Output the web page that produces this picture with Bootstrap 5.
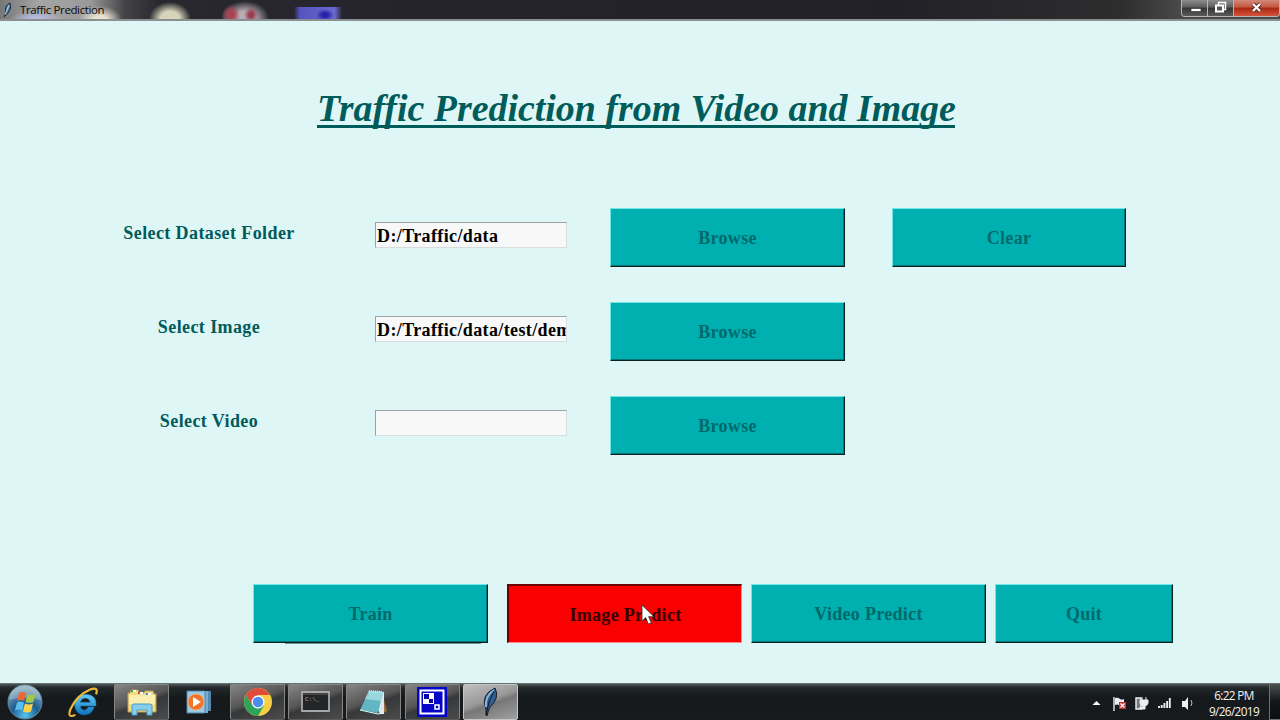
<!doctype html>
<html lang="en">
  <head>
    <meta charset="utf-8">
    <meta name="viewport" content="width=device-width, initial-scale=1">
    <title>Traffic Prediction</title>
    <link href="https://cdn.jsdelivr.net/npm/bootstrap@5.3.0/dist/css/bootstrap.min.css" rel="stylesheet">
    <style>
      body {
        background-color: #dff6f6;
        font-family: "Liberation Serif", "Times New Roman", serif;
      }
      svg {
        display: block;
      }

      /* window title bar */
      .titlebar {
        height: 21px;
        background:
          radial-gradient(ellipse 22px 14px at 100px 20px, #e8e2d2 30%, transparent 100%),
          radial-gradient(ellipse 26px 10px at 36px 20px, #b9bbe6 20%, transparent 100%),
          radial-gradient(ellipse 21px 17px at 170px 19px, #d8d4ba 45%, transparent 100%),
          radial-gradient(ellipse 9px 10px at 231px 15px, #a84452 35%, transparent 100%),
          radial-gradient(ellipse 7px 8px at 251px 15px, #983d4e 30%, transparent 100%),
          radial-gradient(ellipse 24px 17px at 245px 18px, #b8acb4 40%, transparent 100%),
          radial-gradient(ellipse 9px 6px at 325px 15px, #2422aa 30%, transparent 100%),
          linear-gradient(90deg, transparent, #5553bd 12%, #6b69cf 85%, transparent) 294px 7px / 48px 13px no-repeat,
          linear-gradient(90deg, #777 0, #a5a5a5 40px, #9a9a9a 90px, #444346 125px, #29282e 160px, #25242c 400px, #222127 900px, #2d2d2e 1120px, #494949 1180px);
        border-bottom: 2px solid #89908f;
      }
      .titlebar-text {
        font: 11.5px/19px "Open Sans", sans-serif;
        letter-spacing: -.38px;
        color: #0b0b0b;
      }
      .win-controls {
        height: 17px;
        border: 1px solid #b5b5b5;
        border-top: 0;
        border-radius: 0 0 4px 4px;
        overflow: hidden;
      }
      .win-ctl {
        width: 26px;
        background: linear-gradient(#8d8d8d, #5c5c5c 45%, #343434 50%, #5a5a5a);
        border-right: 1px solid #b5b5b5;
      }
      .win-close {
        width: 45px;
        border-right: 0;
        background: linear-gradient(#d08a7c, #c4563f 45%, #a82710 50%, #d2543a);
      }

      /* application form */
      .app {
        height: 662px;
        padding-top: 64px;
      }
      .app-title {
        font-size: 37.9px;
        line-height: 46px;
        font-weight: bold;
        font-style: italic;
        color: #005b5b;
        margin: 0 0 77px 317px;
        white-space: nowrap;
      }
      .app-title span {
        display: inline-block;
        height: 43px;
        width: 638px;
        border-bottom: 3px solid #005b5b;
      }
      .fields {
        display: grid;
        grid-template-columns: 332px 192px 235px 235px;
        grid-auto-rows: 59px;
        row-gap: 35px;
        margin-left: 43px;
      }
      .field-label {
        font-size: 18px;
        font-weight: bold;
        line-height: 22px;
        letter-spacing: .4px;
        color: #005b5b;
        text-align: center;
        padding-top: 14px;
      }
      .tk-entry {
        width: 192px;
        height: 26px;
        margin-top: 14px;
        padding: 2px 0 0 1px;
        border: 1px solid #d5dddd;
        border-top-color: #9aa3a3;
        border-left-color: #9aa3a3;
        background: #f8f8f8;
        color: #000;
        font-size: 18px;
        font-weight: bold;
        letter-spacing: .38px;
        line-height: 22px;
        outline: 0;
      }
      .tk-btn {
        width: 235px;
        height: 59px;
        padding: 1px 0 0;
        border: 1px solid;
        border-color: #74e4e4 #0b2020 #0b2020 #74e4e4;
        border-radius: 0;
        box-shadow: inset -1px -1px #087575;
        background: #00b0b0;
        color: #00696a;
        font-size: 18px;
        font-weight: bold;
        letter-spacing: .3px;
        line-height: 22px;
      }
      .browse-btn {
        margin-left: 43px;
      }
      .clear-btn {
        width: 234px;
        margin-left: 90px;
      }
      .actions {
        margin: 129px 0 0 253px;
      }
      .train-btn {
        position: relative;
      }
      .train-btn::after {
        content: "";
        position: absolute;
        left: 31px;
        right: 6px;
        bottom: -2px;
        height: 1px;
        background: #6f9696;
      }
      .active-btn {
        background: #fa0000;
        border-width: 2px 1px 1px 2px;
        border-color: #6b0000 #ff8a8a #ff8a8a #6b0000;
        box-shadow: none;
        color: #370000;
        padding: 2px 0 0 1px;
        position: relative;
      }
      .quit-btn {
        width: 178px;
      }
      .pointer {
        position: absolute;
        left: 132px;
        top: 18px;
      }

      /* taskbar */
      .taskbar {
        height: 37px;
        background: linear-gradient(#758080 0, #3f4546 2px, #22282a 5px, #15191b 40%, #181b1d);
      }
      .task-item {
        width: 55px;
        height: 36px;
        margin-top: 1px;
        display: flex;
        align-items: center;
        justify-content: center;
      }
      .task-open {
        border: 1px solid #858585;
        border-bottom-color: #5a5a5a;
        border-radius: 2px;
        background: linear-gradient(160deg, #858585, #555 45%, #373839 55%, #4b4b4c);
      }
      .task-current {
        border-color: #c5c5c5;
        background: linear-gradient(160deg, #c0c0c0, #989898 45%, #777 55%, #a0a0a0);
      }
      .tray {
        padding-top: 2px;
      }
      .clock {
        width: 62px;
        font: 11.8px/16px "Open Sans", sans-serif;
        letter-spacing: -.65px;
        color: #f4f4f4;
        text-align: center;
        padding-top: 2px;
      }
      .show-desktop {
        width: 11px;
        border: 1px solid #6c7070;
        border-right: 0;
        background: linear-gradient(#4b5050, #141718 50%, #0b0d0e);
      }
    </style>
  </head>
  <body class="vh-100 overflow-hidden">
    <header class="titlebar d-flex">
      <svg class="ms-1" width="12" height="19" viewBox="0 0 12 19">
        <path d="M0 17 L2 12 Q0 6 6 3 Q8 8 4 13 Z" fill="#4e87b6" stroke="#132536" stroke-width="1"/>
        <path d="M1 15 L5 5" stroke="#d5e9f5" stroke-width=".8"/>
      </svg>
      <span class="titlebar-text ms-1">Traffic Prediction</span>
      <div class="win-controls d-flex ms-auto">
        <div class="win-ctl"><svg width="26" height="16"><path d="M9 8.5h10v3H9z" fill="#fff" stroke="#333" stroke-width=".7"/></svg></div>
        <div class="win-ctl"><svg width="26" height="16"><path d="M10.5 2.5h7v7h-7z" fill="none" stroke="#fff" stroke-width="1.500"/><path d="M8 5.500h7v6H8z" fill="#555" stroke="#fff" stroke-width="2"/></svg></div>
        <div class="win-ctl win-close"><svg width="45" height="16"><path d="M19 4l7 7m0-7l-7 7" stroke="#4b2927" stroke-width="4"/><path d="M19 4l7 7m0-7l-7 7" stroke="#fff" stroke-width="2.300"/></svg></div>
      </div>
    </header>

    <main class="app">
      <h1 class="app-title"><span>Traffic Prediction from Video and Image</span></h1>

      <div class="fields">
        <label class="field-label" for="dataset">Select Dataset Folder</label>
        <input id="dataset" class="tk-entry" type="text" value="D:/Traffic/data">
        <button class="btn tk-btn browse-btn" type="button">Browse</button>
        <button class="btn tk-btn clear-btn" type="button">Clear</button>

        <label class="field-label" for="image">Select Image</label>
        <input id="image" class="tk-entry" type="text" value="D:/Traffic/data/test/demo">
        <button class="btn tk-btn browse-btn" type="button">Browse</button>
        <span></span>

        <label class="field-label" for="video">Select Video</label>
        <input id="video" class="tk-entry" type="text">
        <button class="btn tk-btn browse-btn" type="button">Browse</button>
        <span></span>
      </div>

      <div class="actions d-flex">
        <button class="btn tk-btn train-btn" type="button">Train</button>
        <button class="btn tk-btn active-btn" type="button" style="margin: 0 9px 0 19px">Image Predict
          <svg class="pointer" width="14" height="22" viewBox="0 0 14 22"><path d="M1 1v16l3.700-3.400L7.300 20l3-1.300-2.700-6H13z" fill="#fff" stroke="#333" stroke-width=".8"/></svg>
        </button>
        <button class="btn tk-btn" type="button">Video Predict</button>
        <button class="btn tk-btn quit-btn" type="button" style="margin-left: 9px">Quit</button>
      </div>
    </main>

    <footer class="taskbar d-flex">
      <!-- start -->
      <svg width="56" height="37" viewBox="0 0 56 37">
        <defs>
          <radialGradient id="orb" cx=".5" cy=".9" r=".8"><stop offset="0" stop-color="#55c6ee"/><stop offset=".5" stop-color="#1d5d92"/><stop offset="1" stop-color="#7fa3b8"/></radialGradient>
          <linearGradient id="blue" x2="0" y2="1"><stop stop-color="#65cbf5"/><stop offset="1" stop-color="#0873bd"/></linearGradient>
        </defs>
        <circle cx="25" cy="19" r="17" fill="url(#orb)" stroke="#5f879e"/>
        <path d="M9 17a16 15 0 0 1 32 0Q25 12 9 17" fill="#fff" opacity=".25"/>
        <path d="M19 10q4-2 7 0l-2 8q-3-2-7 0z" fill="#ed6635"/>
        <path d="M27.500 11q4 2 8 0l-2 8q-4 2-8 0z" fill="#a1c747"/>
        <path d="M17 19.500q3-2 7 0l-2 8q-3-2-7 0z" fill="#5cbdf0"/>
        <path d="M25 20.500q4 2 8 0l-2 8q-4 2-8 0z" fill="#fbd247"/>
      </svg>
      <!-- browser -->
      <svg width="58" height="37" viewBox="56 0 58 37">
        <g transform="translate(1 1.500) scale(.98)">
          <path d="M95 23h-6q-2 4-5 3-3-1-3-4h16q1-12-11-12-11 1-11 11 1 10 10 10 8 0 10-8zM81 18q1-4 5-4 4 0 5 4z" fill="url(#blue)" stroke="#1672b3" stroke-width=".5"/>
          <path d="M76 31q-9 4-5-6 6-14 20-20 9-3 6 5" fill="none" stroke="#e9b936" stroke-width="2.200"/>
        </g>
      </svg>
      <!-- explorer -->
      <div class="task-item task-open">
        <svg width="34" height="32" viewBox="0 0 34 32">
          <path d="M3 7h2l1-3h7l1 3h5l1-2h8l1 3h2v18H3z" fill="#f1dc86" stroke="#b99e54"/>
          <path d="M7 5h4m3 2h4m4 1h4" stroke="#fff" stroke-width="2"/>
          <path d="M6 5h2" stroke="#35a544" stroke-width="2"/><path d="M13 7h2" stroke="#d34b33" stroke-width="2"/><path d="M21 8h2" stroke="#378cc7" stroke-width="2"/>
          <path d="M4 9h26v9H4z" fill="#faeeb0"/>
          <path d="M7 29v-9q0-2 2-2h16q2 0 2 2v9h-5v-5H12v5z" fill="#87cdec" stroke="#4f9bc2"/>
        </svg>
      </div>
      <!-- media player -->
      <div class="task-item" style="margin-right: 6px">
        <svg class="ms-1" width="28" height="28" viewBox="0 0 28 28">
          <path d="M8 3h18v20H8z" fill="#5488ac"/><path d="M5 3h18v22H5z" fill="#78adcf"/><path d="M2 3h18v22H2z" fill="#9acbe4" stroke="#4e83a6"/>
          <circle cx="11" cy="14" r="8" fill="#ee7429" stroke="#f7ad72"/><path d="M8 9l8 5-8 5z" fill="#fff"/>
        </svg>
      </div>
      <div class="d-flex" style="gap: 3.200px">
        <!-- chrome -->
        <div class="task-item task-open">
          <svg width="28" height="28" viewBox="0 0 28 28">
            <circle cx="14" cy="14" r="14" fill="#f8cf45"/>
            <path d="M1.900 7A14 14 0 0 1 26.100 7H14l-6 11z" fill="#df4c3c"/>
            <path d="M1.900 7A14 14 0 0 0 14 28l6-10.500H8z" fill="#2ca45b"/>
            <circle cx="14" cy="14" r="6.500" fill="#fff"/><circle cx="14" cy="14" r="5.200" fill="#4a8df0"/>
          </svg>
        </div>
        <!-- command prompt -->
        <div class="task-item task-open">
          <svg width="30" height="22" viewBox="0 0 30 22">
            <path d="M1 1h27v19H1z" fill="#242526" stroke="#a5a7a8" stroke-width="1.800"/><path d="M2 3h25" stroke="#626466"/>
            <text x="4" y="10" font-family="Liberation Mono" font-size="6" fill="#a9a9a9">C:\_</text>
          </svg>
        </div>
        <!-- notepad -->
        <div class="task-item task-open">
          <svg width="30" height="30" viewBox="0 0 30 30">
            <path d="M23 5l5 19-5 3z" fill="#91703e"/><path d="M10 4l15 1 0 22-4 0z" fill="#dce9e8"/>
            <path d="M10 4l14 1-5 21-18-3z" fill="#62b5c2"/><path d="M10 4l14 1-2 9-16-2z" fill="#98d8dd"/>
            <path d="M1 23l18 4 6-1" fill="none" stroke="#e4ffff"/><path d="M10 4l14 1" stroke="#dce6e6" stroke-width="2" stroke-dasharray="1 1"/>
          </svg>
        </div>
        <!-- recorder -->
        <div class="task-item task-open">
          <svg width="30" height="30" viewBox="0 0 30 30">
            <path d="M0 0h30v30H0z" fill="#0505c8"/><path d="M3.500 3.500h23v23h-23z" fill="none" stroke="#fff" stroke-width="2"/>
            <path d="M6 6h11v11H6z" fill="#fff"/><path d="M7 7h5v5H7zm5 5h4v4h-4z" fill="#0505a8"/><path d="M18 18h4v4h-4z" fill="#0505a8" stroke="#fff" stroke-width="1.500"/>
          </svg>
        </div>
        <!-- feather -->
        <div class="task-item task-open task-current">
          <svg width="18" height="32" viewBox="0 0 18 32">
            <path d="M5 23Q-1 9 14 2q5 10-5 19-2 4-3 9L5 29z" fill="#315f91" stroke="#141e2a"/>
            <path d="M5 21Q4 10 13 4" fill="none" stroke="#8cb5d9" stroke-width="2"/><path d="M5 29Q7 15 13 5" fill="none" stroke="#101722"/>
          </svg>
        </div>
      </div>

      <div class="tray d-flex ms-auto">
        <svg width="110" height="35" viewBox="1089 685 110 35">
          <path d="M1092.500 705l4-4 4 4z" fill="#fff"/>
          <path d="M1114 697v14" stroke="#ddd" stroke-width="1.500"/><path d="M1115 698q3-1 5 1 2 1 4 0v7q-3 1-5-1-2-1-4 0z" fill="#ececec"/>
          <path d="M1119 702h7v7h-7z" fill="#c92d30"/><path d="M1120.500 703.500l4 4m0-4l-4 4" stroke="#fff" stroke-width="1.300"/>
          <path d="M1136 698h5v11h-5z" fill="#777" stroke="#f0f0f0" stroke-width="1.400"/>
          <path d="M1140 700h8v3q0 2-3 3v3h-5v-2h3v-1q-3-1-3-3zM1142 700v-3m4 3v-3" fill="#eee" stroke="#eee" stroke-width="1"/>
          <path d="M1159 708v-2m2.700 2v-3m2.700 3v-5m2.700 5v-7m2.700 7v-10" stroke="#ececec" stroke-width="1.900"/>
          <path d="M1182 701h3l3-4v13l-3-3h-3z" fill="#eee"/><path d="M1191 700q2 3 0 6" fill="none" stroke="#bbb"/>
        </svg>
        <div class="clock ms-1">6:22 PM<br>9/26/2019</div>
      </div>
      <div class="show-desktop" style="margin-left: 4px"></div>
    </footer>

    <script src="https://cdn.jsdelivr.net/npm/bootstrap@5.3.0/dist/js/bootstrap.bundle.min.js"></script>
  </body>
</html>
